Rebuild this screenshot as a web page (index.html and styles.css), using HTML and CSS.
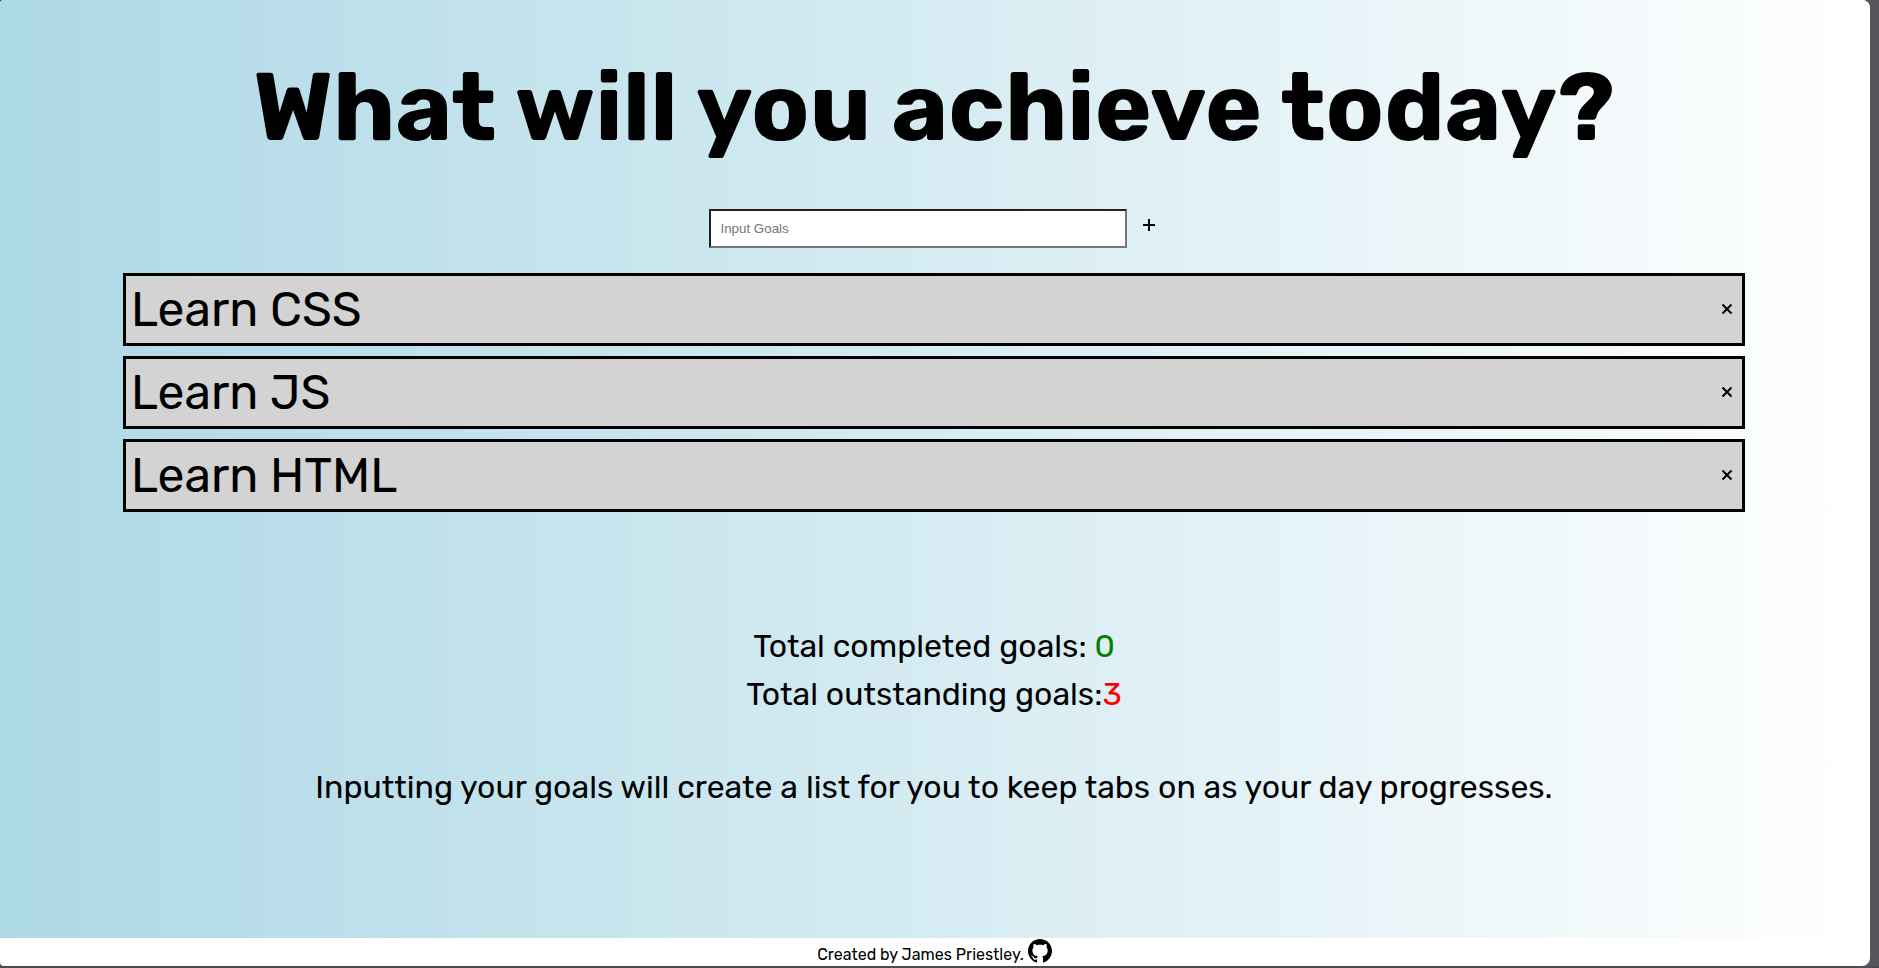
FILE: index.html
```html
<!DOCTYPE html>
<html lang="en">
<head>
<meta charset="utf-8">
<title>Goals</title>
<link rel="stylesheet" href="styles.css">
</head>
<body>
<div class="page">
  <main class="main">
    <h1 class="title">What will you achieve today?</h1>
    <form class="goal-form">
      <input class="goal-input" type="text" placeholder="Input Goals" aria-label="Input Goals">
      <button class="icon-button add" type="button" aria-label="Add goal"><svg class="glyph" viewBox="0 0 12 12" aria-hidden="true"><path d="M6 0v12M0 6h12"/></svg></button>
    </form>
    <ul class="goals">
      <li class="goal"><span>Learn CSS</span><button class="icon-button" type="button" aria-label="Remove Learn CSS"><svg class="glyph" viewBox="0 0 12 12" aria-hidden="true"><path d="M1.500 1.500l9 9M10.500 1.500l-9 9"/></svg></button></li>
      <li class="goal"><span>Learn JS</span><button class="icon-button" type="button" aria-label="Remove Learn JS"><svg class="glyph" viewBox="0 0 12 12" aria-hidden="true"><path d="M1.500 1.500l9 9M10.500 1.500l-9 9"/></svg></button></li>
      <li class="goal"><span>Learn HTML</span><button class="icon-button" type="button" aria-label="Remove Learn HTML"><svg class="glyph" viewBox="0 0 12 12" aria-hidden="true"><path d="M1.500 1.500l9 9M10.500 1.500l-9 9"/></svg></button></li>
    </ul>
    <section class="stats">
      <p>Total completed goals: <span class="done">0</span></p>
      <p>Total outstanding goals:<span class="open">3</span></p>
    </section>
    <p class="intro">Inputting your goals will create a list for you to keep tabs on as your day progresses.</p>
  </main>
  <footer class="footer">
    <p>Created by James Priestley.</p>
    <a class="github" href="#" aria-label="GitHub"><svg viewBox="0 0 16 16" aria-hidden="true"><path d="M8 0C3.58 0 0 3.58 0 8c0 3.54 2.29 6.53 5.47 7.59.4.07.55-.17.55-.38 0-.19-.01-.82-.01-1.490-2.010.37-2.530-.49-2.690-.94-.09-.23-.48-.94-.82-1.130-.28-.15-.68-.52-.01-.53.63-.01 1.080.58 1.230.82.72 1.210 1.870.87 2.330.66.07-.52.28-.87.51-1.070-1.780-.2-3.640-.89-3.640-3.950 0-.87.31-1.590.82-2.150-.08-.2-.36-1.020.08-2.120 0 0 .67-.21 2.200.82.64-.18 1.320-.27 2-.27s1.360.09 2 .27c1.530-1.040 2.200-.82 2.200-.82.44 1.100.16 1.920.08 2.120.51.56.82 1.270.82 2.150 0 3.070-1.870 3.750-3.650 3.950.29.25.54.73.54 1.480 0 1.070-.01 1.930-.01 2.200 0 .21.15.46.55.38A8.010 8.010 0 0 0 16 8c0-4.420-3.580-8-8-8z"/></svg></a>
  </footer>
</div>
</body>
</html>
```
FILE: styles.css
```css
* {
  box-sizing: border-box;
}

body {
  margin: 0;
  padding: 0 9px 2px 0;
  min-height: 100vh;
  display: flex;
  background: linear-gradient(to top, #4d4a50 0 2px, #55565b 2px);
  color: #000;
  font-family: Rubik, Inter, sans-serif;
}

p,
h1,
ul {
  margin: 0;
  padding: 0;
}

.page {
  flex: 1;
  display: flex;
  flex-direction: column;
  overflow: hidden;
  border-radius: 4px 8px 8px 4px;
  background: #fff;
}

.main {
  flex: 1;
  padding: 49px 125px 0 123px;
  background: linear-gradient(to right, lightblue, #fff);
  text-align: center;
}

.title {
  font-size: 96px;
  font-weight: 700;
  line-height: 116px;
}

.goal-form {
  display: flex;
  justify-content: center;
  align-items: center;
  gap: 10px;
  margin-top: 44px;
  padding-left: 1px;
}

.goal-input {
  width: 418px;
  height: 39px;
  padding: 0 10px;
  border: 2px inset #767676;
  background: #fff;
  font-family: "Liberation Sans", sans-serif;
}

.goal-input::placeholder {
  color: #757575;
}

.icon-button {
  display: flex;
  padding: 6px 6px 8px;
  border: 0;
  background: none;
  cursor: pointer;
}

.add {
  margin-bottom: 6px;
}

.glyph {
  width: 12px;
  height: 12px;
  fill: none;
  stroke: #000;
  stroke-width: 2;
}

.goals {
  display: grid;
  gap: 10px;
  margin-top: 25px;
  list-style: none;
}

.goal {
  display: flex;
  justify-content: space-between;
  align-items: center;
  padding: 5px 3px 5px 5px;
  border: 3px solid #000;
  background: lightgray;
  font-size: 48px;
  line-height: 57px;
}

.stats {
  margin-top: 110px;
  font-size: 32px;
  line-height: 48px;
}

.done {
  color: green;
}

.open {
  color: red;
}

.intro {
  margin-top: 45px;
  font-size: 32px;
  line-height: 48px;
}

.footer {
  display: flex;
  justify-content: center;
  gap: 4px;
  height: 28px;
  padding: 1px 1px 0 0;
  font-size: 16px;
  line-height: 32px;
}

.github svg {
  display: block;
  width: 24px;
  height: 24px;
}
```
